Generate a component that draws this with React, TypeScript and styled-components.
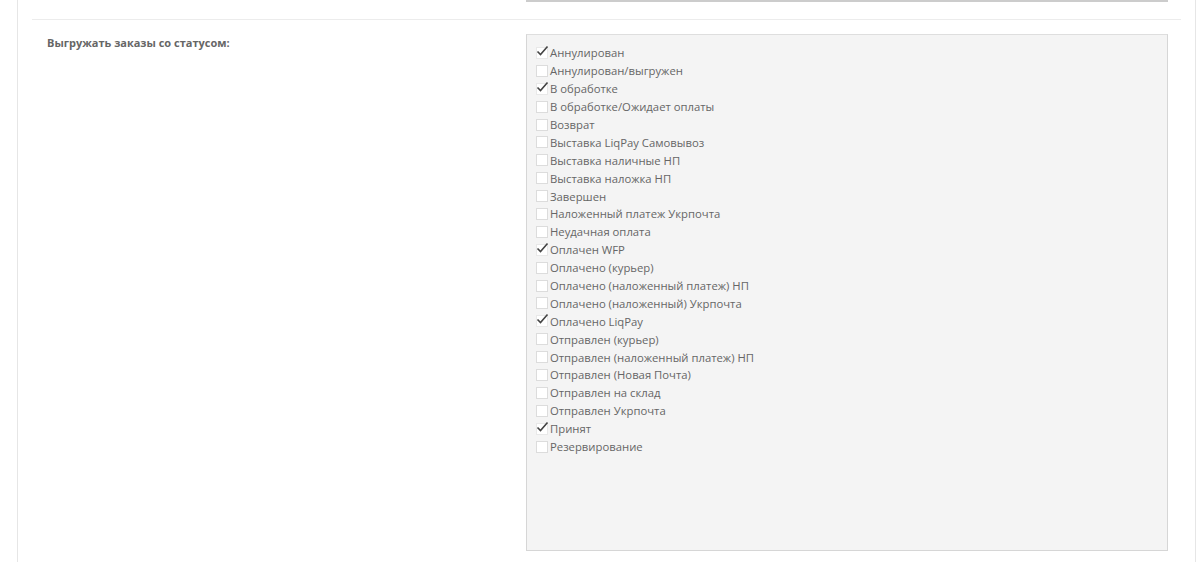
import React, { useState } from "react";
import styled, { createGlobalStyle } from "styled-components";

const GlobalStyle = createGlobalStyle`
    html, body {
        margin: 0;
        padding: 0;
        background: #fff;
        font-family: "Open Sans", "DejaVu Sans", sans-serif;
    }
`;

const Panel = styled.div`
    margin-left: 17px;
    width: 1179px;
    height: 562px;
    border-left: 1px solid #e6e6e6;
    border-right: 1px solid #e6e6e6;
    padding: 0 14px 0 14px;
    box-sizing: border-box;
    overflow: hidden;
`;

const Row = styled.div<{ $sep?: boolean }>`
    display: grid;
    grid-template-columns: 494px 642px;
    padding: ${(p) => (p.$sep ? "14px 15px 15px 0" : "0 15px 17px 0")};
    border-top: ${(p) => (p.$sep ? "1px solid #ececec" : "none")};
`;

const Label = styled.label`
    padding: 2px 0 0 15px;
    font-size: 11px;
    font-weight: 700;
    color: #666;
    line-height: 14px;
`;

const InputEdge = styled.div`
    grid-column: 2;
    height: 0;
    border-bottom: 2px solid #ccc;
`;

const Well = styled.div`
    height: 517px;
    box-sizing: border-box;
    background: #f4f4f4;
    border: 1px solid #d6d6d6;
    border-top-color: #dedede;
    padding: 9px 10px 8px 9px;
`;

const Option = styled.label`
    display: flex;
    align-items: center;
    height: 17.9px;
    font-size: 11.3px;
    color: #666;
    cursor: pointer;
    white-space: nowrap;
`;

const Box = styled.span<{ $on: boolean }>`
    position: relative;
    width: 12px;
    height: 12px;
    margin-right: 2px;
    flex: none;
    background: #fff;
    border: 1px solid ${(p) => (p.$on ? "#e8e8e8" : "#dcdcdc")};
    box-sizing: border-box;
`;

const Tick = styled.svg`
    position: absolute;
    left: -1px;
    top: -3px;
`;

const statuses: [string, boolean][] = [
    ["Аннулирован", true],
    ["Аннулирован/выгружен", false],
    ["В обработке", true],
    ["В обработке/Ожидает оплаты", false],
    ["Возврат", false],
    ["Выставка LiqPay Самовывоз", false],
    ["Выставка наличные НП", false],
    ["Выставка наложка НП", false],
    ["Завершен", false],
    ["Наложенный платеж Укрпочта", false],
    ["Неудачная оплата", false],
    ["Оплачен WFP", true],
    ["Оплачено (курьер)", false],
    ["Оплачено (наложенный платеж) НП", false],
    ["Оплачено (наложенный) Укрпочта", false],
    ["Оплачено LiqPay", true],
    ["Отправлен (курьер)", false],
    ["Отправлен (наложенный платеж) НП", false],
    ["Отправлен (Новая Почта)", false],
    ["Отправлен на склад", false],
    ["Отправлен Укрпочта", false],
    ["Принят", true],
    ["Резервирование", false],
];

export default function App() {
    const [checked, setChecked] = useState<boolean[]>(statuses.map((s) => s[1]));

    const toggle = (i: number) => {
        setChecked((prev) => prev.map((v, j) => (j === i ? !v : v)));
    };

    return (
        <>
            <GlobalStyle />
            <Panel>
                <Row>
                    <InputEdge />
                </Row>
                <Row $sep>
                    <Label>Выгружать заказы со статусом:</Label>
                    <Well>
                        {statuses.map(([name], i) => (
                            <Option key={name} onClick={() => toggle(i)}>
                                <Box $on={checked[i]}>
                                    {checked[i] && (
                                        <Tick width="13" height="12" viewBox="0 0 13 12">
                                            <path
                                                d="M1.5 6.5 L4.5 9.5 L11.5 1.5"
                                                fill="none"
                                                stroke="#444"
                                                strokeWidth="1.6"
                                            />
                                        </Tick>
                                    )}
                                </Box>
                                {name}
                            </Option>
                        ))}
                    </Well>
                </Row>
            </Panel>
        </>
    );
}
